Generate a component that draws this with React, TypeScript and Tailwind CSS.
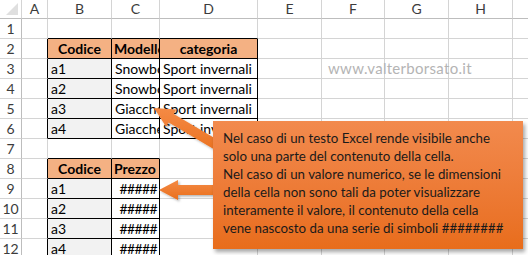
import React from "react";

const cols = ["", "A", "B", "C", "D", "E", "F", "G", "H", ""];

type Cell = { text: string; head?: boolean; gray?: boolean; right?: boolean };

const sheet: Record<string, Cell> = {
  "2-2": { text: "Codice", head: true },
  "2-3": { text: "Modello", head: true },
  "2-4": { text: "categoria", head: true },
  "3-2": { text: "a1", gray: true },
  "4-2": { text: "a2", gray: true },
  "5-2": { text: "a3", gray: true },
  "6-2": { text: "a4", gray: true },
  "3-3": { text: "Snowboard" },
  "4-3": { text: "Snowboard" },
  "5-3": { text: "Giacche" },
  "6-3": { text: "Giacche" },
  "3-4": { text: "Sport invernali" },
  "4-4": { text: "Sport invernali" },
  "5-4": { text: "Sport invernali" },
  "6-4": { text: "Sport invernali" },
  "8-2": { text: "Codice", head: true },
  "8-3": { text: "Prezzo", head: true },
  "9-2": { text: "a1", gray: true },
  "10-2": { text: "a2", gray: true },
  "11-2": { text: "a3", gray: true },
  "12-2": { text: "a4", gray: true },
  "9-3": { text: "#####", right: true },
  "10-3": { text: "#####", right: true },
  "11-3": { text: "#####", right: true },
  "12-3": { text: "#####", right: true },
};

// black borders for the two tables (B2:D6 and B8:C12)
function blackRight(r: number, c: number) {
  if (r >= 2 && r <= 6 && c >= 1 && c <= 4) return true;
  if (r >= 8 && r <= 12 && c >= 1 && c <= 3) return true;
  return false;
}
function blackBottom(r: number, c: number) {
  if (r >= 1 && r <= 6 && c >= 2 && c <= 4) return true;
  if (r >= 7 && r <= 12 && c >= 2 && c <= 3) return true;
  return false;
}

function SheetCell({ r, c }: { r: number; c: number }) {
  const cell = sheet[`${r}-${c}`];
  const br = blackRight(r, c) ? "border-r-black" : "border-r-[#d4d4d4]";
  const bb = blackBottom(r, c) ? "border-b-black" : "border-b-[#d4d4d4]";
  let bg = "bg-white";
  if (cell?.head) bg = "bg-[#f4b183]";
  else if (cell?.gray) bg = "bg-[#f2f2f2]";
  const align = cell?.head
    ? c === 2 || c === 4
      ? "justify-center font-bold"
      : "justify-start font-bold pl-[2px]"
    : cell?.right
      ? "justify-end pr-[2px] tracking-[-0.6px]"
      : "justify-start pl-[3px]";
  return (
    <div className={`flex items-end pb-[2px] overflow-hidden whitespace-nowrap border-r border-b ${br} ${bb} ${bg} ${align}`}>
      {cell?.text}
    </div>
  );
}

export default function App() {
  const rows = Array.from({ length: 12 }, (_, i) => i + 1);
  return (
    <div className="relative w-[528px] h-[255px] overflow-hidden bg-white text-[14px] leading-none text-black font-['Lato','Open_Sans',sans-serif]">
      <div className="grid grid-cols-[22px_26px_64px_48px_98px_64px_63px_64px_64px_64px] grid-rows-[19px_repeat(12,20px)]">
        {/* column headers */}
        {cols.map((l, i) => (
          <div
            key={"h" + i}
            className="relative flex items-center justify-center border-r border-b border-r-[#d4d4d4] border-b-[#bdbdbd] text-[#3c3c3c] text-[14px]"
          >
            {i === 0 ? (
              <div className="absolute right-[3px] bottom-[3px] w-0 h-0 border-l-[12px] border-l-transparent border-b-[12px] border-b-[#dfdfdf]" />
            ) : (
              l
            )}
          </div>
        ))}
        {rows.map((r) => (
          <React.Fragment key={r}>
            <div className="flex items-center justify-center border-r border-b border-r-[#bdbdbd] border-b-[#d4d4d4] text-[#3c3c3c] text-[14px]">
              {r}
            </div>
            {cols.slice(1).map((_, ci) => (
              <SheetCell key={ci} r={r} c={ci + 1} />
            ))}
          </React.Fragment>
        ))}
      </div>

      {/* watermark */}
      <div className="absolute left-[328px] top-[61px] text-[15px] text-[#b4b4b4] tracking-[0.3px]">
        www.valterborsato.it
      </div>

      {/* arrows */}
      <svg className="absolute left-0 top-0" width="528" height="255" viewBox="0 0 528 255">
        <defs>
          <linearGradient id="ar" x1="0" y1="0" x2="0" y2="1">
            <stop offset="0" stopColor="#f48a45" />
            <stop offset="1" stopColor="#ea6f1c" />
          </linearGradient>
          <filter id="sh" x="-20%" y="-20%" width="140%" height="140%">
            <feDropShadow dx="1.5" dy="1.5" stdDeviation="1.2" floodColor="#000" floodOpacity="0.3" />
          </filter>
        </defs>
        <polygon
          filter="url(#sh)"
          fill="url(#ar)"
          points="154,108 176.3,109.6 173.8,113.9 232.6,148.7 227.5,157.3 168.7,122.5 166.1,126.8"
        />
        <polygon
          filter="url(#sh)"
          fill="url(#ar)"
          points="159,190 178,180 178,185 225,185 225,195 178,195 178,200"
        />
      </svg>

      {/* callout */}
      <div className="absolute left-[213px] top-[121px] w-[310px] h-[128px] whitespace-nowrap bg-gradient-to-b from-[#f28a4d] to-[#e86d1b] shadow-[2px_3px_4px_rgba(0,0,0,0.35)] pl-[10px] pt-[8px] text-[13.3px] leading-[18px] text-[#1a1a1a]">
        <div>Nel caso di un testo Excel rende visibile anche</div>
        <div>solo una parte del contenuto della cella.</div>
        <div>Nel caso di un valore numerico, se le dimensioni</div>
        <div>della cella non sono tali da poter visualizzare</div>
        <div>interamente il valore, il contenuto della cella</div>
        <div>vene nascosto da una serie di simboli ########</div>
      </div>
    </div>
  );
}
